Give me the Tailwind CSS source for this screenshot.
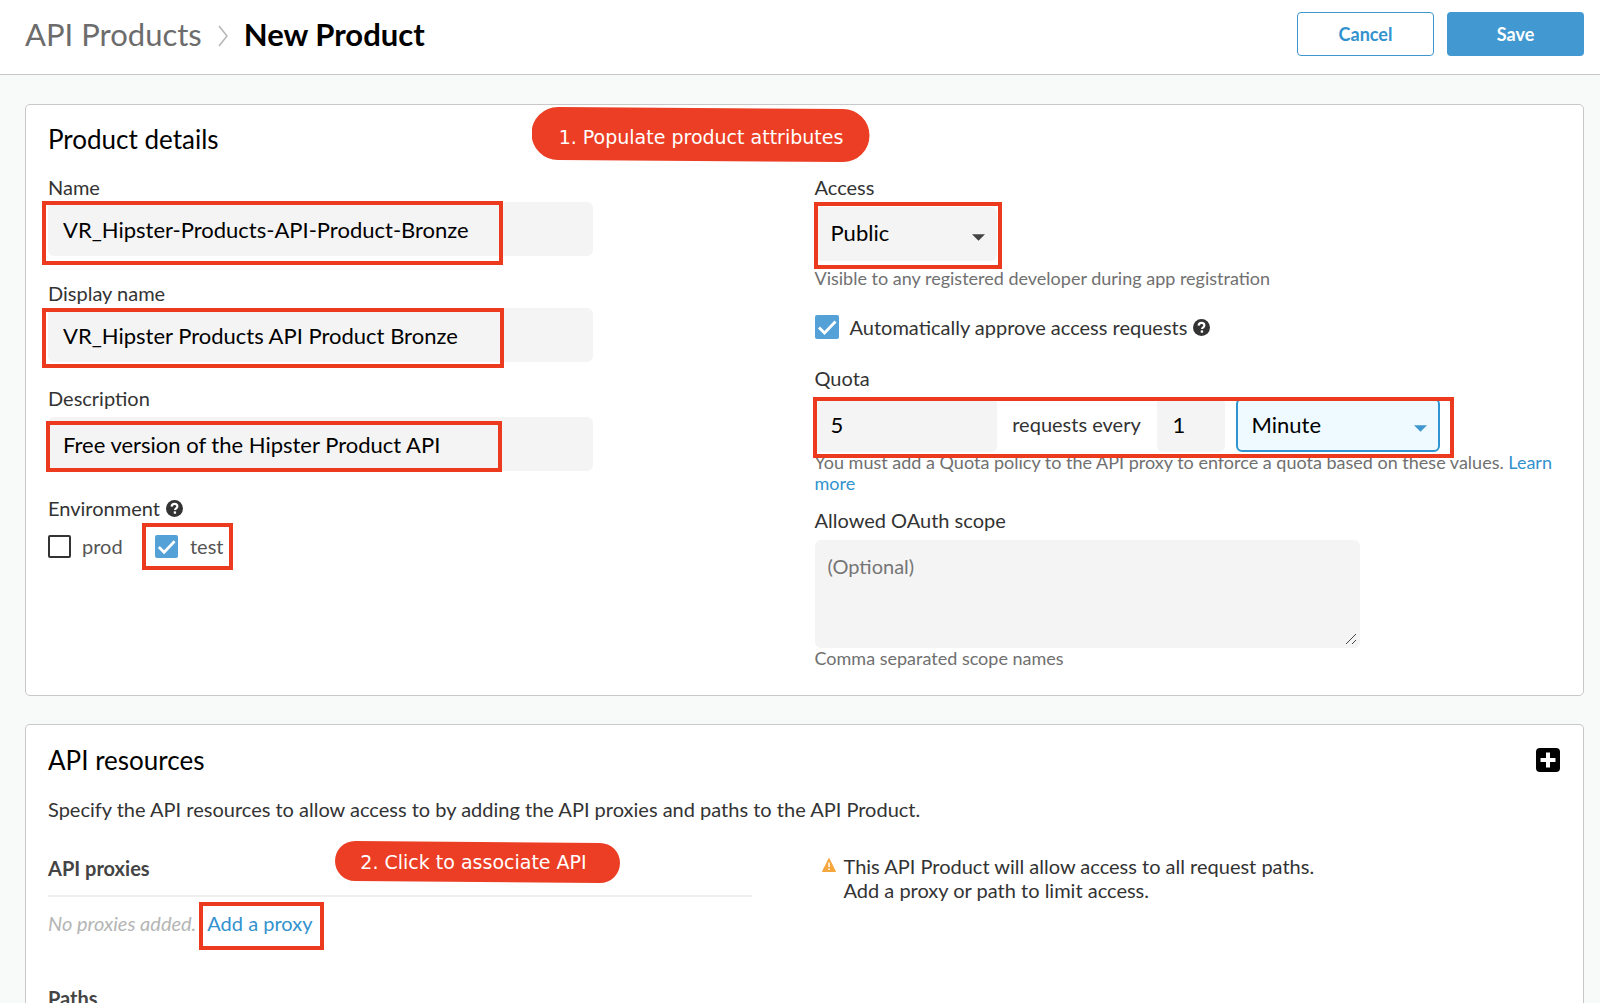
<!DOCTYPE html>
<html lang="en">
<head>
<meta charset="utf-8">
<title>New Product</title>
<script src="https://cdn.jsdelivr.net/npm/@tailwindcss/browser@4"></script>
</head>
<body class="min-h-screen bg-[#f8faf9] font-['Lato',sans-serif] text-xl leading-6 text-[#333]">
<svg class="hidden" aria-hidden="true">
  <symbol id="help" viewBox="0 0 16 16">
    <circle cx="8" cy="8" r="8" fill="#333"/>
    <path d="M5.300 6.200C5.400 4.500 6.500 3.700 8 3.700s2.700.9 2.700 2.300c0 1.900-2.200 1.900-2.200 3.500" fill="none" stroke="#fff" stroke-width="2"/>
    <rect x="7.300" y="10.700" width="2.200" height="2.200" fill="#fff"/>
  </symbol>
  <symbol id="check" viewBox="0 0 24 24">
    <path d="M4 12.500L9.500 18L20.500 6.500" fill="none" stroke="#fff" stroke-width="2.800"/>
  </symbol>
  <symbol id="caret" viewBox="0 0 14 7"><path d="M0 0H14L7 7Z" fill="currentColor"/></symbol>
</svg>

<header class="flex h-[75px] items-center justify-between border-b border-[#c8c8c8] bg-white pr-4 pb-[6px] pl-[25px]">
  <nav class="flex items-center text-[31px] leading-9">
    <a href="#" class="text-[#6c6c6c]">API Products</a>
    <svg class="mx-4 mt-1 h-[22px] w-[10px]" viewBox="0 0 10 22" fill="none" stroke="#b5b5b5" stroke-width="1.500"><path d="M1 1L9 11L1 21"/></svg>
    <h1 class="font-bold text-black">New Product</h1>
  </nav>
  <div class="flex gap-[13px]">
    <button type="button" class="h-11 w-[137px] rounded-sm border border-[#3f97cf] bg-white text-lg font-bold text-[#3392ce]">Cancel</button>
    <button type="button" class="h-11 w-[137px] rounded-sm bg-[#4298d0] text-lg font-bold text-white">Save</button>
  </div>
</header>

<main class="flex flex-col gap-7 pt-[29px] pr-4 pl-[25px]">
  <section class="relative rounded-[5px] border border-[#c8c8c8] bg-white pb-[26px] pl-[22px]">
    <h2 class="pt-[18px] text-[26px] leading-8 text-black">Product details</h2>
    <form class="mt-5 grid grid-cols-2 pr-[2px]">
      <div class="flex flex-col items-start">
        <label for="name">Name</label>
        <div class="relative mt-[3px] w-[545px]">
          <input id="name" type="text" value="VR_Hipster-Products-API-Product-Bronze" class="block h-[54px] w-full rounded-md bg-[#f4f4f4] px-[15px] text-[22px] text-black">
          <span class="pointer-events-none absolute -top-px -left-[6px] h-16 w-[461px] border-4 border-[#ec3a1f]"></span>
        </div>
        <label for="display" class="mt-[25px]">Display name</label>
        <div class="relative mt-[3px] w-[545px]">
          <input id="display" type="text" value="VR_Hipster Products API Product Bronze" class="block h-[54px] w-full rounded-md bg-[#f4f4f4] px-[15px] text-[22px] text-black">
          <span class="pointer-events-none absolute top-0 -left-[6px] h-[60px] w-[462px] border-4 border-[#ec3a1f]"></span>
        </div>
        <label for="description" class="mt-6">Description</label>
        <div class="relative mt-[7px] w-[545px]">
          <input id="description" type="text" value="Free version of the Hipster Product API" class="block h-[54px] w-full rounded-md bg-[#f4f4f4] px-[15px] text-[22px] text-black">
          <span class="pointer-events-none absolute top-1 -left-[2px] h-[51px] w-[456px] border-4 border-[#ec3a1f]"></span>
        </div>
        <fieldset class="mt-[25px]">
          <legend class="flex items-center gap-[6px]">Environment <svg class="size-[17px]"><use href="#help"/></svg></legend>
          <div class="mt-[14px] flex text-[#555]">
            <label class="flex w-[107px] items-center gap-[11px]"><input type="checkbox" class="size-[23px] appearance-none rounded-[2px] border-2 border-[#333] bg-white">prod</label>
            <label class="relative flex items-center gap-3"><input type="checkbox" checked class="size-[23px] appearance-none rounded-[2px] bg-[#54a1d8]"><svg class="absolute left-0 size-[23px]"><use href="#check"/></svg>test
              <span class="pointer-events-none absolute -top-[11px] -left-[13px] h-[47px] w-[91px] border-4 border-[#ec3a1f]"></span></label>
          </div>
        </fieldset>
      </div>

      <div class="flex flex-col items-start">
        <label for="access">Access</label>
        <div class="relative mt-2 w-[182px]">
          <select id="access" class="block h-[54px] w-full appearance-none rounded-md bg-[#f4f4f4] px-4 pb-[2px] text-[22px] text-black"><option>Public</option></select>
          <svg class="absolute top-[27px] right-3 h-[7px] w-[13px] text-[#444]"><use href="#caret"/></svg>
          <span class="pointer-events-none absolute -top-[5px] -left-px h-[67px] w-[188px] border-4 border-[#ec3a1f]"></span>
        </div>
        <p class="mt-[7px] text-lg leading-[21px] text-[#707070]">Visible to any registered developer during app registration</p>
        <div class="mt-[26px] flex items-center">
          <label class="relative flex items-center gap-[11px]"><input type="checkbox" checked class="size-6 appearance-none rounded-[2px] bg-[#54a1d8]"><svg class="absolute left-0 size-6"><use href="#check"/></svg>Automatically approve access requests</label>
          <svg class="ml-[6px] size-[17px]"><use href="#help"/></svg>
        </div>
        <label for="quota" class="mt-[27px]">Quota</label>
        <div class="relative mt-2 flex items-center">
          <input id="quota" type="text" value="5" class="h-[54px] w-[182px] rounded-md bg-[#f4f4f4] px-4 pb-[2px] text-[22px] text-black">
          <label for="interval" class="w-40 pb-[2px] text-center">requests every</label>
          <input id="interval" type="text" value="1" class="h-[54px] w-[68px] rounded-md bg-[#f4f4f4] px-4 pb-[2px] text-[22px] text-black">
          <div class="relative ml-[11px] w-[204px]">
            <select aria-label="Interval unit" class="block h-[54px] w-full appearance-none rounded-md border-2 border-[#2f94cf] bg-[#eefaff] px-[14px] text-[22px] text-black"><option>Minute</option></select>
            <svg class="absolute top-[27px] right-[13px] h-[7px] w-[13px] text-[#3f97cf]"><use href="#caret"/></svg>
          </div>
          <span class="pointer-events-none absolute -top-px -left-[2px] h-[61px] w-[641px] border-4 border-[#ec3a1f]"></span>
        </div>
        <p class="pr-5 text-lg leading-[21px] text-[#707070]">You must add a Quota policy to the API proxy to enforce a quota based on these values. <a href="#" class="text-[#3392ce]">Learn more</a></p>
        <label for="scope" class="mt-[14px]">Allowed OAuth scope</label>
        <div class="relative mt-2 w-[545px]">
          <textarea id="scope" placeholder="(Optional)" class="block h-[108px] w-full resize-none rounded-md bg-[#f4f4f4] px-[13px] py-[14px] placeholder:text-[#757575]"></textarea>
          <svg class="absolute right-1 bottom-1 size-[10px]" viewBox="0 0 10 10" stroke="#444" stroke-width="1"><path d="M0 10L10 0M6 10L10 6"/></svg>
        </div>
        <p class="text-lg leading-[21px] text-[#707070]">Comma separated scope names</p>
      </div>
    </form>
    <div class="absolute top-[2px] left-[506px] flex h-[55px] w-[338px] items-center justify-center pt-1 font-['DejaVu_Sans',sans-serif] text-[19px] text-white">
      <svg class="absolute inset-0 size-full" viewBox="0 0 338 55" fill="#ec3e24"><path d="M26 0L311 2A26 26 0 0 1 311 55L26 53A26 26 0 0 1 26 0Z"/></svg>
      <span class="relative">1. Populate product attributes</span>
    </div>
  </section>

  <section class="relative rounded-t-[5px] border border-b-0 border-[#c8c8c8] bg-white pl-[22px]">
    <div class="flex items-center justify-between pt-[19px] pr-[23px]">
      <h2 class="text-[26px] leading-8 text-black">API resources</h2>
      <button type="button" aria-label="Add resource"><svg class="size-6" viewBox="0 0 24 24"><rect width="24" height="24" rx="4"/><path d="M12 4.500V19.500M4.500 12H19.500" stroke="#fff" stroke-width="4"/></svg></button>
    </div>
    <p class="mt-[21px]">Specify the API resources to allow access to by adding the API proxies and paths to the API Product.</p>
    <div class="mt-[33px] grid grid-cols-2 pr-[2px]">
      <div class="pt-[2px] pr-[63px]">
        <h3 class="border-b-2 border-[#efefef] pb-[15px] font-bold text-[#444]">API proxies</h3>
        <p class="mt-[14px] flex gap-[11px]"><i class="text-[#b5b5b5]">No proxies added.</i>
          <span class="relative"><a href="#" class="text-[#3392ce]">Add a proxy</a><span class="pointer-events-none absolute -top-[9px] -right-3 -bottom-[15px] -left-2 border-4 border-[#ec3a1f]"></span></span></p>
        <h3 class="mt-[51px] font-bold text-[#444]">Paths</h3>
      </div>
      <div class="flex items-start gap-2 pl-[7px]">
        <svg class="mt-1 h-[14px] w-[14px]" viewBox="0 0 14 14"><path d="M7 .5L13.500 13.500H.5Z" fill="#f5a63c" stroke="#f5a63c" stroke-linejoin="round"/><path d="M7 4.500V9M7 10.500V12" stroke="#fff" stroke-width="1.500"/></svg>
        <p>This API Product will allow access to all request paths.<br>Add a proxy or path to limit access.</p>
      </div>
    </div>
    <div class="absolute top-[116px] left-[309px] flex h-[42px] w-[285px] items-center justify-center pr-2 font-['DejaVu_Sans',sans-serif] text-[19px] text-white">
      <svg class="absolute inset-0 size-full" viewBox="0 0 285 42" fill="#ec3e24"><path d="M20 0L265 2A20 20 0 0 1 265 42L20 40A20 20 0 0 1 20 0Z"/></svg>
      <span class="relative">2. Click to associate API</span>
    </div>
  </section>
</main>
</body>
</html>
